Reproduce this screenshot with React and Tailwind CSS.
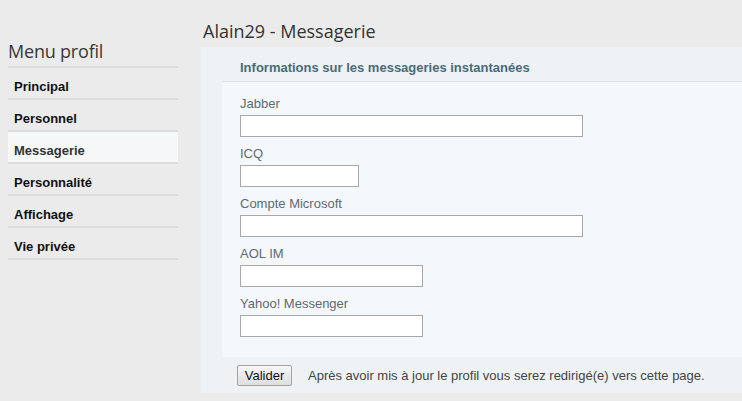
import React from "react";

const menu = ["Principal", "Personnel", "Messagerie", "Personnalité", "Affichage", "Vie privée"];

const fields = [
  { label: "Jabber", w: "w-[343px]" },
  { label: "ICQ", w: "w-[119px]" },
  { label: "Compte Microsoft", w: "w-[343px]" },
  { label: "AOL IM", w: "w-[183px]" },
  { label: "Yahoo! Messenger", w: "w-[183px]" },
];

export default function App() {
  return (
    <div className="w-[742px] h-[401px] overflow-hidden bg-[#ebebeb] flex font-['Liberation_Sans',Arial,sans-serif]">
      <div className="w-[201px] shrink-0 pl-2">
        <div className="w-[170px]">
          <div className="mt-[39px] h-[29px] border-b-2 border-[#dcdcdc] text-[18px] leading-[24px] tracking-[-0.2px] text-[#383838] font-['Open_Sans',sans-serif]">
            Menu profil
          </div>
          {menu.map((m) => (
            <div
              key={m}
              className={`h-[32px] border-b-2 border-[#dcdcdc] px-[6px] pt-[10px] text-[13px] leading-[18px] font-bold ${
                m === "Messagerie" ? "bg-[#f5f7f9] text-[#333]" : "text-[#111]"
              }`}
            >
              {m}
            </div>
          ))}
        </div>
      </div>
      <div className="flex-1 min-w-0">
        <div className="mt-[19px] h-[24px] pl-[2px] text-[18px] leading-[24px] text-[#333] font-['Open_Sans',sans-serif]">
          Alain29 - Messagerie
        </div>
        <div className="mt-[4px] bg-[#eef2f5]">
          <div className="h-[34px] pl-[39px] pt-[12px] text-[13px] leading-[17px] font-bold text-[#4a6b78]">
            Informations sur les messageries instantanées
          </div>
          <div className="ml-[21px] bg-[#f5f8fa] border-t border-[#dde2e6] pl-[18px] pt-[14px] pb-[20px] flex flex-col gap-[9px]">
            {fields.map((f) => (
              <div key={f.label}>
                <div className="text-[13px] leading-[16px] text-[#5d6a72]">{f.label}</div>
                <input
                  type="text"
                  className={`mt-[3px] block h-[22px] ${f.w} bg-white border border-[#a8a8a8] outline-none`}
                />
              </div>
            ))}
          </div>
          <div className="h-[36px] pl-[36px] pt-[8px] flex items-start">
            <button className="h-[21px] w-[55px] border border-[#a3a3a3] rounded-[2px] bg-gradient-to-b from-[#f7f7f7] to-[#dedede] text-[13px] leading-[19px] text-[#111]">
              Valider
            </button>
            <span className="ml-[16px] text-[13px] leading-[21px] text-[#444]">
              Après avoir mis à jour le profil vous serez redirigé(e) vers cette page.
            </span>
          </div>
        </div>
      </div>
    </div>
  );
}
